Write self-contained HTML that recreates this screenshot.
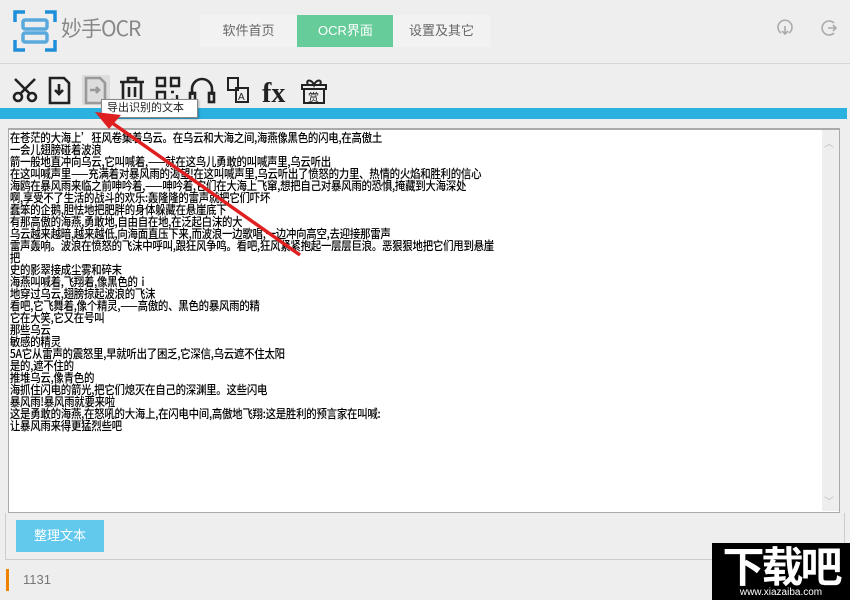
<!DOCTYPE html>
<html><head><meta charset="utf-8"><style>
*{margin:0;padding:0;box-sizing:border-box}
body{width:850px;height:600px;background:#eeeeee;position:relative;overflow:hidden;font-family:"Liberation Sans","Noto Sans CJK SC",sans-serif}
.abs{position:absolute}
.tab{position:absolute;top:15px;height:32px;width:97px;text-align:center;line-height:32px;font-size:13px;color:#666;background:#f2f2f2}
.txt{position:absolute;left:8px;top:128px;width:832px;height:385px;background:#fff;border:1px solid #aaa;border-top:2px solid #aaa;overflow:hidden}
.txt pre{font-family:"Noto Sans CJK SC","WenQuanYi Zen Hei",sans-serif;font-size:12px;line-height:12px;color:#000;padding:2px 0 0 1px;letter-spacing:-0.3px;white-space:pre;transform:scaleX(0.87);transform-origin:0 0;font-weight:500}
</style></head><body>
<svg class="abs" style="left:13px;top:10px" width="44" height="42" viewBox="0 0 44 42" fill="none" stroke="#1e8fd8" stroke-width="3.5">
<path d="M2 12V2h10M32 2h10v10M2 30v10h10M32 40h10V30"/>
<rect x="10" y="10" width="24" height="9" rx="2" stroke="#5aa9dd"/>
<rect x="10" y="23" width="24" height="9" rx="2" stroke="#5aa9dd"/>
</svg>
<div class="abs" style="left:61px;top:13px;font-size:21px;color:#888;font-family:'Noto Sans CJK SC',sans-serif;letter-spacing:-1px">妙手OCR</div>
<div class="tab" style="left:200px">软件首页</div>
<div class="tab" style="left:297px;background:#66cc99;color:#fff">OCR界面</div>
<div class="tab" style="left:393px">设置及其它</div>
<svg class="abs" style="left:776px;top:19px" width="18" height="18" viewBox="0 0 18 18" fill="none" stroke="#aaa" stroke-width="1.6"><path d="M5 14A7 7 0 1 1 13 14"/><path d="M9 7v8M6 12l3 3 3-3"/></svg>
<svg class="abs" style="left:820px;top:19px" width="18" height="18" viewBox="0 0 18 18" fill="none" stroke="#aaa" stroke-width="1.6"><path d="M14 4A7 7 0 1 0 14 14"/><path d="M8 9h8M13 6l3 3-3 3"/></svg>
<div class="abs" style="left:0;top:63px;width:850px;height:1px;background:#d6d6d6"></div>
<svg class="abs" style="left:12px;top:75px" width="320" height="30" viewBox="0 0 320 30" fill="none" stroke="#222" stroke-width="2.6">
<circle cx="6" cy="22" r="4"/><circle cx="20" cy="22" r="4"/><path d="M3 4l15 15M23 4L8 19"/>
<path d="M38 3h14l5 5v20H38z"/><path d="M47 9v10M43 15l4 4 4-4"/>
<rect x="70" y="0" width="28" height="30" fill="#ddd" stroke="none"/>
<path d="M74 3h14l5 5v20H74z" stroke="#999"/><path d="M78 15h9M84 12l3 3-3 3" stroke="#999"/>
<path d="M108 7h24M116 7V3h8v4M111 7v20h18V7M117 12v10M123 12v10"/>
<path d="M145 3h8v8h-8zM159 3h8v8h-8zM145 17h8v8h-8zM159 17h3M165 20v5M159 25h3" stroke-width="2.4"/>
<path d="M180 20v-6a10 10 0 0 1 20 0v6"/><rect x="178" y="18" width="5" height="9"/><rect x="197" y="18" width="5" height="9"/>
<path d="M216 3h10v12h-10zM224 13h12v14h-12z" stroke-width="2"/>
<text x="226" y="25" font-size="10" fill="#222" stroke="none" font-family="Liberation Sans">A</text>
<text x="250" y="27" font-size="28" fill="#222" stroke="none" font-family="Liberation Serif" font-weight="bold">fx</text>
<path d="M290 10h24v4h-24zM292 14h20v14h-20zM296 10c-3-6 4-6 6 0c2-6 9-6 6 0" stroke-width="2"/>
<text x="296" y="26" font-size="11" fill="#222" stroke="none" font-family="Noto Sans CJK SC">赏</text>
</svg>
<div class="abs" style="left:0;top:108px;width:847px;height:11px;background:#2bb1e0"></div>
<div class="abs" style="left:101px;top:99px;width:97px;height:19px;background:#fff;border:1px solid #888;font-size:11px;line-height:17px;padding-left:5px;color:#222;box-shadow:1px 1px 2px rgba(0,0,0,.3);z-index:3">导出识别的文本</div>
<div class="txt"><pre>在苍茫的大海上’狂风卷集着乌云。在乌云和大海之间,海燕像黑色的闪电,在高傲土
一会儿翅膀碰着波浪
箭一般地直冲向乌云,它叫喊着,——就在这鸟儿勇敢的叫喊声里,乌云听出
在这叫喊声里——充满着对暴风雨的渴望!在这叫喊声里,乌云听出了愤怒的力里、热情的火焰和胜利的信心
海鸥在暴风雨来临之前呻吟着,——呻吟着,它们在大海上飞窜,想把自己对暴风雨的恐惧,掩藏到大海深处
啊,享受不了生活的战斗的欢乐:轰隆隆的雷声就把它们吓坏
蠢笨的企鹅,胆怯地把肥胖的身体躲藏在悬崖底下
有那高傲的海燕,勇敢地,自由自在地,在泛起白沫的大
乌云越来越暗,越来越低,向海面直压下来,而波浪一边歌唱,一边冲向高空,去迎接那雷声
雷声轰响。波浪在愤怒的飞沫中呼叫,跟狂风争鸣。看吧,狂风紧紧抱起一层层巨浪。恶狠狠地把它们甩到悬崖
把
史的影翠接成尘雾和碎末
海燕叫喊着,飞翔着,像黑色的ｉ
地穿过乌云,翅膀掠起波浪的飞沫
看吧,它飞舞着,像个精灵,——高傲的、黑色的暴风雨的精
它在大笑,它又在号叫
那些乌云
敏感的精灵
5A它从雷声的震怒里,早就听出了困乏,它深信,乌云遮不住太阳
是的,遮不住的
推堆乌云,像青色的
海抓住闪电的箭光,把它们熄灭在自己的深渊里。这些闪电
暴风雨!暴风雨就要来啦
这是勇敢的海燕,在怒吼的大海上,在闪电中间,高傲地飞翔:这是胜利的预言家在叫喊:
让暴风雨来得更猛烈些吧</pre>
<div class="abs" style="right:0;top:0;width:17px;height:381px;background:#eee"></div>
<div class="abs" style="right:5px;top:5px;color:#bbb;font-size:10px">︿</div>
<div class="abs" style="right:5px;bottom:4px;color:#bbb;font-size:10px">﹀</div>
</div>
<div class="abs" style="left:5px;top:513px;width:840px;height:47px;border:1px solid #ccc;border-top:none;background:#eee"></div>
<div class="abs" style="left:16px;top:520px;width:88px;height:32px;background:#62c9ec;color:#fff;font-size:13px;text-align:center;line-height:32px">整理文本</div>
<div class="abs" style="left:6px;top:569px;width:3px;height:22px;background:#f08000"></div>
<div class="abs" style="left:23px;top:572px;font-size:13px;color:#777">1131</div>
<svg class="abs" style="left:0;top:0;z-index:4" width="850" height="600"><path d="M300 255L108 120" stroke="#e02020" stroke-width="3.5" fill="none"/><path d="M95 112l26 3-12 14z" fill="#e02020"/></svg>
<div class="abs" style="left:712px;top:543px;width:138px;height:57px;background:#000;color:#fff;z-index:5">
<div style="font-size:42px;line-height:44px;font-weight:bold;text-align:center;font-family:'Noto Sans CJK SC',sans-serif;letter-spacing:-3px">下载吧</div>
<div style="font-size:10px;text-align:center;line-height:12px">www.xiazaiba.com</div></div>
</body></html>
